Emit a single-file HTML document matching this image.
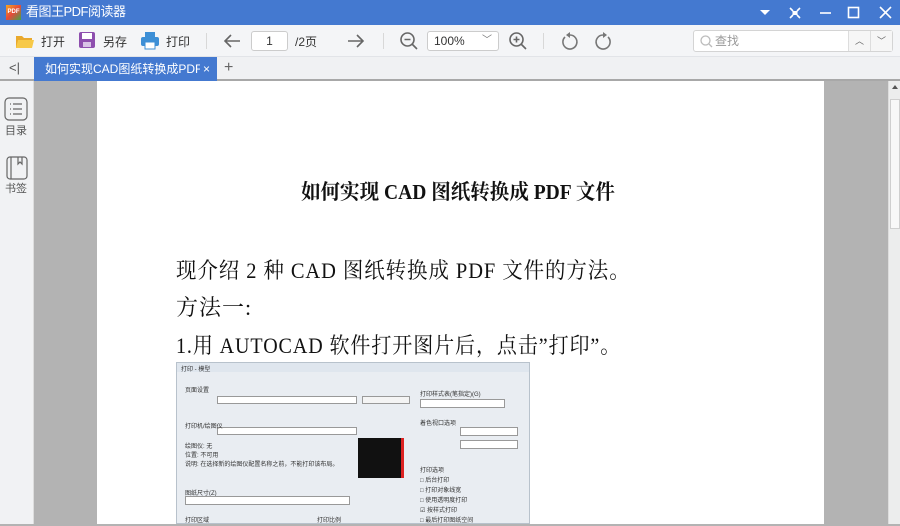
<!DOCTYPE html>
<html><head><meta charset="utf-8"><style>
*{margin:0;padding:0;box-sizing:border-box}
body{width:900px;height:524px;overflow:hidden;background:#b3b3b3;font-family:"Liberation Sans","Noto Sans CJK SC",sans-serif;position:relative}
.a{position:absolute}
#title{left:0;top:0;width:900px;height:25px;background:#4479d0;color:#fff;font-size:13px}
#tb{left:0;top:25px;width:900px;height:32px;background:#f4f5f7;font-size:12px;color:#333;border-bottom:1px solid #e2e4e8}
#tabs{left:0;top:57px;width:900px;height:24px;background:#f0f1f3;border-bottom:2px solid #a8a8a8}
#side{left:0;top:81px;width:34px;height:443px;background:#f1f2f4;border-right:1px solid #ddd;font-size:11px;color:#555}
#page{left:97px;top:81px;width:727px;height:443px;background:#fff}
#sb{left:888px;top:81px;width:12px;height:443px;background:#eceded;border-left:1px solid #ddd}
.serif{font-family:"Liberation Serif","Noto Serif CJK SC",serif;color:#111;white-space:nowrap;transform-origin:left top}
</style></head><body>
<div id="title" class="a">
 <div class="a" style="left:6px;top:5px;width:15px;height:15px;background:linear-gradient(135deg,#f5a623,#e64a3b 50%,#3fa54a);font-size:6px;color:#fff;line-height:15px;text-align:center;font-weight:bold">PDF</div>
 <div class="a" style="left:26px;top:4px;font-size:13px;line-height:16px;letter-spacing:-0.5px">看图王PDF阅读器</div>
 <svg class="a" style="left:755px;top:0" width="145" height="25" fill="none" stroke="#fff" stroke-width="1.6">
  <path d="M5 10h10l-5 5z" fill="#fff" stroke="none"/>
  <path d="M35 8l3 3M45 8l-3 3M35 18l3-3M45 18l-3-3"/><rect x="37.5" y="11" width="5" height="4" fill="#fff" stroke="none"/>
  <path d="M65 13h11"/>
  <rect x="93.5" y="7.5" width="10" height="10"/>
  <path d="M125 7l11 11M136 7l-11 11"/>
 </svg>
</div>
<div id="tb" class="a">
 <svg class="a" style="left:15px;top:7px" width="20" height="17"><path d="M1 4h6l2 2h8v10H1z" fill="#e9a92d"/><path d="M3 8h16l-2 8H1z" fill="#f7c948"/></svg>
 <div class="a" style="left:41px;top:8px">打开</div>
 <svg class="a" style="left:78px;top:6px" width="18" height="18"><rect x="1" y="1" width="16" height="16" rx="2" fill="#8e4fae"/><rect x="4" y="2" width="10" height="6" fill="#fff"/><rect x="5" y="11" width="8" height="5" fill="#d9c3e6"/></svg>
 <div class="a" style="left:103px;top:8px">另存</div>
 <svg class="a" style="left:140px;top:6px" width="20" height="19"><rect x="5" y="1" width="10" height="5" fill="#3d8fd6"/><rect x="1" y="6" width="18" height="9" rx="2" fill="#3d8fd6"/><rect x="5" y="11" width="10" height="7" fill="#fff" stroke="#3d8fd6"/></svg>
 <div class="a" style="left:166px;top:8px">打印</div>
 <div class="a" style="left:206px;top:8px;width:1px;height:16px;background:#d8d8d8"></div>
 <svg class="a" style="left:222px;top:7px" width="20" height="18" fill="none" stroke="#666" stroke-width="1.6"><path d="M18 9H3M9 3L3 9l6 6"/></svg>
 <div class="a" style="left:251px;top:6px;width:37px;height:20px;border:1px solid #ccc;background:#fff;border-radius:3px;text-align:center;line-height:18px">1</div>
 <div class="a" style="left:295px;top:8px">/2页</div>
 <svg class="a" style="left:346px;top:7px" width="20" height="18" fill="none" stroke="#666" stroke-width="1.6"><path d="M2 9h15M11 3l6 6-6 6"/></svg>
 <div class="a" style="left:383px;top:8px;width:1px;height:16px;background:#d8d8d8"></div>
 <svg class="a" style="left:399px;top:6px" width="20" height="20" fill="none" stroke="#666" stroke-width="1.6"><circle cx="8.5" cy="8.5" r="6.5"/><path d="M5.5 8.5h6M13 13l5 5"/></svg>
 <div class="a" style="left:427px;top:6px;width:72px;height:20px;border:1px solid #ccc;background:#fff;border-radius:3px;line-height:18px;padding-left:6px">100%<span style="position:absolute;right:6px;top:0;color:#777;font-size:10px">﹀</span></div>
 <svg class="a" style="left:508px;top:6px" width="20" height="20" fill="none" stroke="#666" stroke-width="1.6"><circle cx="8.5" cy="8.5" r="6.5"/><path d="M5.5 8.5h6M8.5 5.5v6M13 13l5 5"/></svg>
 <div class="a" style="left:543px;top:8px;width:1px;height:16px;background:#d8d8d8"></div>
 <svg class="a" style="left:560px;top:6px" width="20" height="20" fill="none" stroke="#777" stroke-width="1.6"><path d="M5 6a7 7 0 1 0 5-2"/><path d="M10 1v6l-4-3z" fill="#777" stroke="none"/></svg>
 <svg class="a" style="left:593px;top:6px" width="20" height="20" fill="none" stroke="#777" stroke-width="1.6"><path d="M15 6a7 7 0 1 1-5-2"/><path d="M10 1v6l4-3z" fill="#777" stroke="none"/></svg>
 <div class="a" style="left:693px;top:5px;width:200px;height:22px;border:1px solid #d4d4d4;background:#fff;border-radius:3px;color:#999;line-height:20px">
  <svg class="a" style="left:6px;top:4px" width="13" height="13" fill="none" stroke="#bbb" stroke-width="1.3"><circle cx="5.5" cy="5.5" r="4.5"/><path d="M9 9l3 3"/></svg>
  <span class="a" style="left:21px;top:0">查找</span>
  <div class="a" style="left:154px;top:0;width:22px;height:20px;border-left:1px solid #ddd;background:#f6f6f6;text-align:center;font-size:9px;color:#666">︿</div>
  <div class="a" style="left:176px;top:0;width:22px;height:20px;border-left:1px solid #ddd;background:#f6f6f6;text-align:center;font-size:9px;color:#666">﹀</div>
 </div>
</div>
<div id="tabs" class="a">
 <div class="a" style="left:9px;top:3px;font-size:13px;color:#555">&lt;|</div>
 <div class="a" style="left:34px;top:0;width:183px;height:24px;background:#4479d0;color:#fff;font-size:12px;line-height:24px;padding-left:11px;white-space:nowrap;overflow:hidden"><span style="display:inline-block;width:155px;overflow:hidden;vertical-align:top">如何实现CAD图纸转换成PDF文件</span><span class="a" style="right:7px;top:0">×</span></div>
 <div class="a" style="left:224px;top:2px;font-size:16px;color:#666">+</div>
</div>
<div id="side" class="a">
 <svg class="a" style="left:4px;top:16px" width="24" height="24" fill="none" stroke="#666" stroke-width="1.2"><rect x="1" y="1" width="22" height="22" rx="4"/><path d="M6 7h1M9 7h9M6 12h1M9 12h9M6 17h1M9 17h9"/></svg>
 <div class="a" style="left:5px;top:41px">目录</div>
 <svg class="a" style="left:6px;top:75px" width="22" height="24" fill="none" stroke="#666" stroke-width="1.2"><rect x="1" y="1" width="20" height="22" rx="3"/><path d="M5 1v22M12 1v7l2-2 2 2V1"/></svg>
 <div class="a" style="left:5px;top:99px">书签</div>
</div>
<div id="page" class="a">
 <div class="a serif" style="left:204px;top:95px;font-size:21px;font-weight:bold;transform:scaleX(0.93)">如何实现 CAD 图纸转换成 PDF 文件</div>
 <div class="a serif" style="left:79px;top:173px;font-size:22px;letter-spacing:1px;transform:scaleX(0.93)">现介绍 2 种 CAD 图纸转换成 PDF 文件的方法。</div>
 <div class="a serif" style="left:79px;top:210px;font-size:22px;letter-spacing:1px">方法一:</div>
 <div class="a serif" style="left:79px;top:248px;font-size:22px;letter-spacing:1px;transform:scaleX(0.91)">1.用 AUTOCAD 软件打开图片后，点击”打印”。</div>
 <div class="a" style="left:79px;top:281px;width:354px;height:162px;background:#e9edf2;border:1px solid #b8c2cc;font-size:6px;color:#333">
  <div class="a" style="left:0;top:0;width:352px;height:9px;background:#dfe6ee"></div>
  <div class="a" style="left:4px;top:1px">打印 - 模型</div>
  <div class="a" style="left:8px;top:22px">页面设置</div>
  <div class="a" style="left:40px;top:33px;width:140px;height:8px;background:#fff;border:1px solid #999"></div>
  <div class="a" style="left:185px;top:33px;width:48px;height:8px;background:#f4f4f4;border:1px solid #999"></div>
  <div class="a" style="left:40px;top:64px;width:140px;height:8px;background:#fff;border:1px solid #999"></div>
  <div class="a" style="left:8px;top:58px">打印机/绘图仪</div>
  <div class="a" style="left:8px;top:80px;line-height:9px">绘图仪: 无<br>位置: 不可用<br>说明: 在选择新的绘图仪配置名称之前，不能打印该布局。</div>
  <div class="a" style="left:181px;top:75px;width:46px;height:40px;background:#111;border-right:3px solid #d22"></div>
  <div class="a" style="left:8px;top:125px">图纸尺寸(Z)</div>
  <div class="a" style="left:8px;top:133px;width:165px;height:9px;background:#fff;border:1px solid #999"></div>
  <div class="a" style="left:8px;top:152px">打印区域</div>
  <div class="a" style="left:140px;top:152px">打印比例</div>
  <div class="a" style="left:243px;top:26px">打印样式表(笔指定)(G)</div>
  <div class="a" style="left:243px;top:36px;width:85px;height:9px;background:#fff;border:1px solid #999"></div>
  <div class="a" style="left:243px;top:55px">着色视口选项</div>
  <div class="a" style="left:283px;top:64px;width:58px;height:9px;background:#fff;border:1px solid #999"></div>
  <div class="a" style="left:283px;top:77px;width:58px;height:9px;background:#fff;border:1px solid #999"></div>
  <div class="a" style="left:243px;top:103px;line-height:10px">打印选项<br>□ 后台打印<br>□ 打印对象线宽<br>□ 使用透明度打印<br>☑ 按样式打印<br>□ 最后打印图纸空间</div>
 </div>
</div>
<div id="sb" class="a">
 <div class="a" style="left:3px;top:4px;width:0;height:0;border-left:3px solid transparent;border-right:3px solid transparent;border-bottom:4px solid #555"></div>
 <div class="a" style="left:1px;top:18px;width:10px;height:130px;background:#f8f8f8;border:1px solid #cfcfcf"></div>
</div>
</body></html>
